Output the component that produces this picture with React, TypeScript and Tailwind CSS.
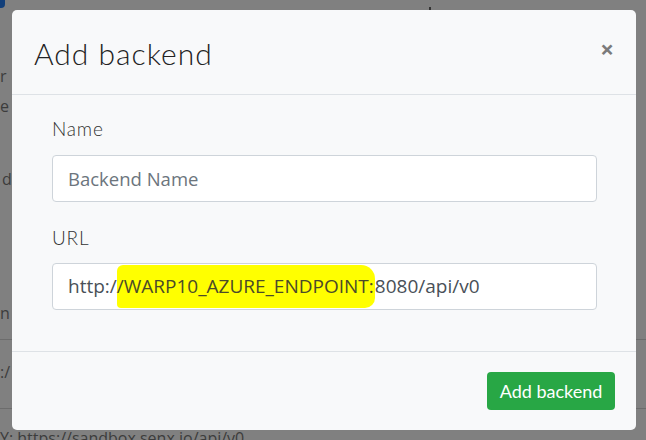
import React from 'react';

const quick = { fontFamily: 'Lato, "Open Sans", sans-serif' };
const segoe = { fontFamily: '"Open Sans", "Noto Sans", sans-serif' };

function BackgroundPage() {
  // page content seen through the backdrop, mostly hidden by the modal
  return (
    <div className="relative h-[440px] w-[646px] overflow-hidden bg-[#808080] text-[#3c3c3c]" style={segoe}>
      <div className="absolute left-0 top-0 h-[8px] w-[5px] rounded-br-[4px] bg-[#123f7a]" />
      <div className="absolute left-[429px] top-[7px] h-[3px] w-[2px] bg-[#333]" />
      <div className="flex flex-col pt-[64px] text-[16px] leading-[24px]">
        <div className="h-[24px]">r</div>
        <div className="mt-[6px] h-[24px]">e</div>
        <div className="mt-[49px] h-[24px] ml-[2px]">d</div>
        <div className="mt-[110px] h-[24px]">n</div>
        <div className="mt-[14px] h-px w-full bg-[#6c6c6c]" />
        <div className="mt-[20px] h-[24px]">:/</div>
        <div className="mt-[24px] h-px w-full bg-[#6c6c6c]" />
        <div className="mt-[17px] h-[24px] whitespace-nowrap">Y: https://sandbox.senx.io/api/v0</div>
      </div>
    </div>
  );
}

export default function App() {
  return (
    <div className="relative h-[440px] w-[646px] overflow-hidden">
      <BackgroundPage />
      <div className="absolute left-[12px] top-[10px] w-[624px] rounded-[5px] bg-[#f8f9fa] text-[#212529]">
        <div className="flex h-[85px] items-start justify-between border-b border-[#dee2e6] pl-[22px] pr-[22px]">
          <h5 className="mt-[23px] text-[30px] font-light leading-[40px] tracking-[1px] text-[#222]" style={quick}>
            Add backend
          </h5>
          <button className="mt-[27px] text-[24px] font-bold leading-[23px] text-[#7b7b7b]" style={segoe}>
            ×
          </button>
        </div>
        <div className="flex flex-col pb-[41px] pl-[40px] pr-[39px] pt-[20px]">
          <label className="h-[27px] text-[19px] font-light leading-[27px] tracking-[0.8px] text-[#333]" style={quick}>
            Name
          </label>
          <input
            className="mt-[13px] h-[47px] rounded-[4px] border border-[#ced4da] bg-white px-[15px] text-[18.5px] text-[#495057] placeholder:text-[#6c757d] outline-none"
            style={segoe}
            placeholder="Backend Name"
          />
          <label className="mt-[22px] h-[27px] text-[19px] font-light leading-[27px] tracking-[0.8px] text-[#333]" style={quick}>
            URL
          </label>
          <div
            className="mt-[12px] flex h-[47px] items-center rounded-[4px] border border-[#ced4da] bg-white px-[15px] text-[19px] text-[#495057] whitespace-nowrap"
            style={segoe}
          >
            <span>http:/</span>
            <span className="rounded-[6px_14px_10px_4px] bg-[#ffff00] py-[7px] pr-[1px] text-[#4b4a2a]">/WARP10_AZURE_ENDPOINT:</span>
            <span>8080/api/v0</span>
          </div>
        </div>
        <div className="flex h-[79px] items-center justify-end border-t border-[#dee2e6] pr-[21px]">
          <button
            className="h-[38px] w-[128px] rounded-[4px] bg-[#28a745] text-[18px] leading-[38px] text-white"
            style={quick}
          >
            Add backend
          </button>
        </div>
      </div>
    </div>
  );
}
